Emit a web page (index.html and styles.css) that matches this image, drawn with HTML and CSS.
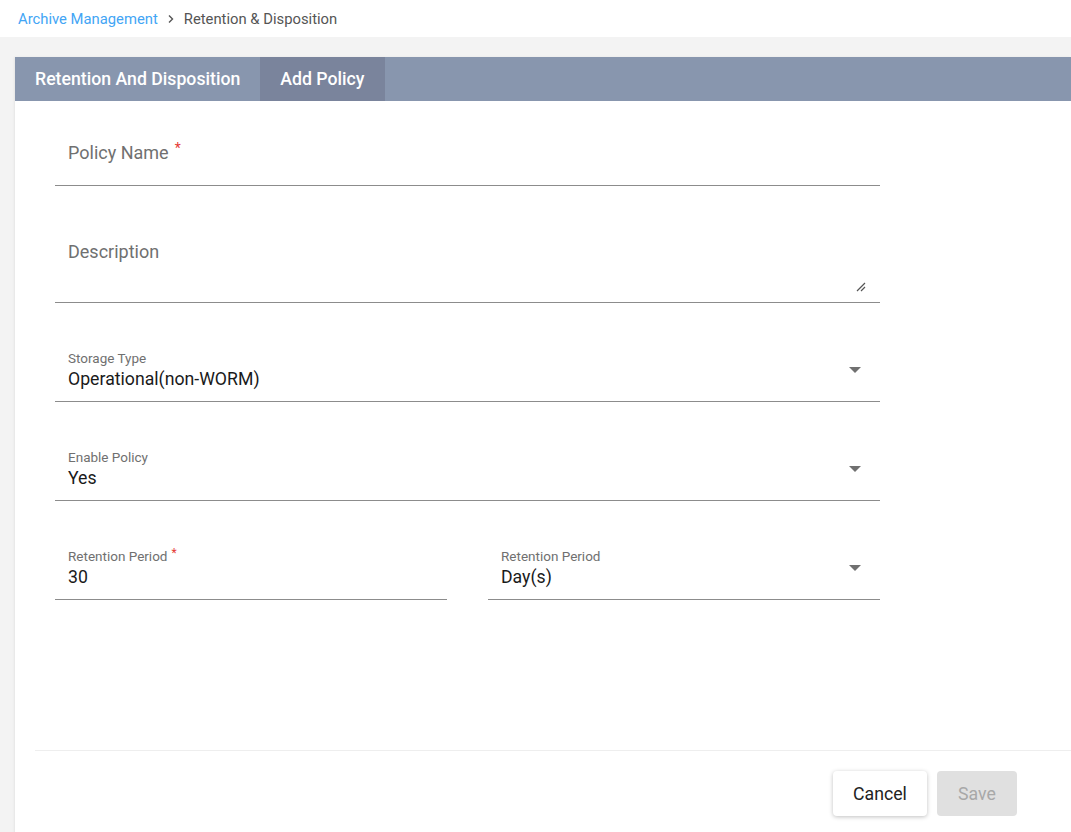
FILE: index.html
```html
<!DOCTYPE html>
<html lang="en">
<head>
<meta charset="utf-8">
<title>Add Policy</title>
<link rel="stylesheet" href="styles.css">
</head>
<body>
<div class="breadcrumb">
  <a class="crumb-link">Archive Management</a>
  <svg class="crumb-sep" width="12" height="12" viewBox="0 0 12 12"><path d="M4 2.5 L7.5 6 L4 9.5" fill="none" stroke="#555" stroke-width="1.4"/></svg>
  <span class="crumb-current">Retention &amp; Disposition</span>
</div>
<div class="page">
  <div class="card">
    <div class="tabs">
      <div class="tab">Retention And Disposition</div>
      <div class="tab active">Add Policy</div>
    </div>
    <div class="form">
      <div class="field text-field">
        <span class="placeholder">Policy Name<sup class="req">*</sup></span>
      </div>
      <div class="field textarea-field">
        <span class="placeholder">Description</span>
        <svg class="resize" width="10" height="10" viewBox="0 0 10 10"><path d="M9 1 L1 9 M9 5 L5 9" stroke="#555" stroke-width="1.2" fill="none"/></svg>
      </div>
      <div class="field select-field">
        <div class="small-label">Storage Type</div>
        <div class="value">Operational(non-WORM)</div>
        <span class="arrow"></span>
      </div>
      <div class="field select-field">
        <div class="small-label">Enable Policy</div>
        <div class="value">Yes</div>
        <span class="arrow"></span>
      </div>
      <div class="row">
        <div class="field select-field">
          <div class="small-label">Retention Period<sup class="req">*</sup></div>
          <div class="value">30</div>
        </div>
        <div class="field select-field">
          <div class="small-label">Retention Period</div>
          <div class="value">Day(s)</div>
          <span class="arrow"></span>
        </div>
      </div>
    </div>
    <div class="footer">
      <button class="btn cancel">Cancel</button>
      <button class="btn save" disabled>Save</button>
    </div>
  </div>
</div>
</body>
</html>
```
FILE: styles.css
```css
* { box-sizing: border-box; }
html, body { margin: 0; padding: 0; height: 100%; }
body {
  font-family: Roboto, "Liberation Sans", Arial, sans-serif;
  background: #f3f3f3;
  overflow: hidden;
}
.breadcrumb {
  height: 37px;
  background: #fff;
  display: flex;
  align-items: center;
  padding-left: 18px;
  font-size: 14.8px;
}
.crumb-link { color: #42a5f5; }
.crumb-sep { margin: 0 7px 0 7px; }
.crumb-current { color: #555; }
.page {
  padding: 20px 0 0 15px;
}
.card {
  background: #fff;
  min-height: 800px;
  box-shadow: -1px 0 2px rgba(0,0,0,0.06);
}
.tabs {
  display: flex;
  height: 44px;
  background: #8896ae;
}
.tab {
  padding: 0 20px;
  display: flex;
  align-items: center;
  color: #fff;
  font-size: 17.7px;
  font-weight: 500;
}
.tab.active { background: #7a849c; }
.form {
  padding: 20px 0 0 40px;
  width: 865px;
}
.field {
  position: relative;
  border-bottom: 1px solid #8c8c8c;
}
.text-field {
  padding: 20px 0 20px 13px;
}
.placeholder {
  display: block;
  font-size: 18px;
  line-height: 24px;
  color: #707070;
}
.req {
  color: #e53935;
  font-size: 14px;
  line-height: 0;
  margin-left: 6px;
  vertical-align: 6px;
}
.small-label .req { font-size: 12px; margin-left: 4px; vertical-align: 4px; }
.textarea-field {
  margin-top: 20px;
  padding: 34px 0 38px 13px;
}
.resize {
  position: absolute;
  right: 14px;
  bottom: 10px;
}
.select-field {
  margin-top: 47px;
  padding: 0 0 10px 13px;
}
.small-label {
  font-size: 13.5px;
  line-height: 16px;
  color: #707070;
}
.value {
  margin-top: 1px;
  font-size: 17.7px;
  line-height: 24px;
  color: #1a1a1a;
}
.arrow {
  position: absolute;
  right: 19px;
  top: 17px;
  width: 0;
  height: 0;
  border-left: 6px solid transparent;
  border-right: 6px solid transparent;
  border-top: 6px solid #707070;
}
.row {
  display: grid;
  grid-template-columns: 392px 392px;
  column-gap: 41px;
}
.row .field { margin-top: 47px; }
.footer {
  margin: 150px 0 0 20px;
  border-top: 1px solid #eeeeee;
  padding: 20px 54px 0 0;
  display: flex;
  justify-content: flex-end;
  gap: 10px;
}
.btn {
  font-family: Roboto, "Liberation Sans", Arial, sans-serif;
  font-size: 17.7px;
  height: 45px;
  border: none;
  border-radius: 4px;
}
.cancel {
  width: 94px;
  background: #fff;
  color: #222;
  box-shadow: 0 1px 4px rgba(0,0,0,0.25);
}
.save {
  width: 80px;
  background: #e0e0e0;
  color: #a8a8a8;
}
```
